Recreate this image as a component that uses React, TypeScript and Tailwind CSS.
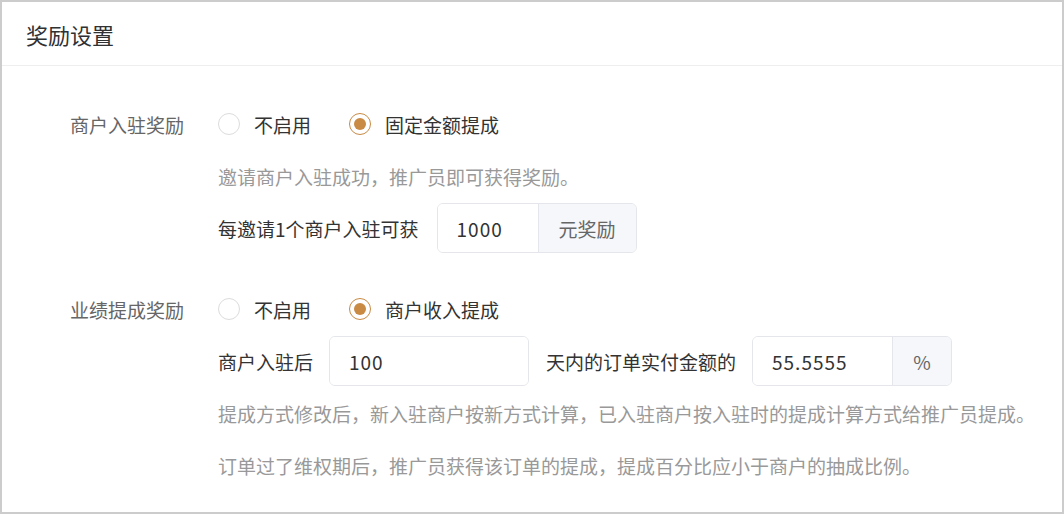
import React from "react";

const font = { fontFamily: '"Noto Sans CJK SC", "Noto Sans", sans-serif' };

/* ---------- RADIO ---------- */

const Radio = ({ label, checked }: { label: string; checked?: boolean }) => (
  <label className="flex items-center gap-[14px] cursor-pointer">
    <span
      className={`w-[22px] h-[22px] rounded-full border flex items-center justify-center bg-white ${
        checked ? "border-[#c98a43]" : "border-[#dcdcdc]"
      }`}
    >
      {checked && <span className="w-[12px] h-[12px] rounded-full bg-[#c98a43]" />}
    </span>
    <span className="text-[#333333]">{label}</span>
  </label>
);

/* ---------- INPUT WITH ADDON ---------- */

const AddonInput = ({
  value,
  addon,
  inputWidth,
  addonWidth,
}: {
  value: string;
  addon?: string;
  inputWidth: string;
  addonWidth?: string;
}) => (
  <div className="flex h-[50px] rounded-[6px] border border-[#e4e6eb] overflow-hidden">
    <input
      defaultValue={value}
      className={`${inputWidth} h-full px-[19px] text-[#333333] tracking-[1px] outline-none bg-white`}
    />
    {addon && (
      <div
        className={`${addonWidth} h-full flex items-center justify-center bg-[#f5f7fa] border-l border-[#e4e6eb] text-[#666666]`}
      >
        {addon}
      </div>
    )}
  </div>
);

const Line = ({ children }: { children: React.ReactNode }) => (
  <div className="h-[52px] flex items-center">{children}</div>
);

/* ---------- FORM ITEM ---------- */

const FormItem = ({ label, children }: { label: string; children: React.ReactNode }) => (
  <div className="flex">
    <div className="w-[148px] h-[52px] flex items-center text-[#666666]">{label}</div>
    <div className="flex flex-col">{children}</div>
  </div>
);

export default function App() {
  return (
    <div
      style={font}
      className="w-[1064px] h-[514px] border-2 border-[#cccccc] bg-white text-[19px] leading-none overflow-hidden"
    >
      <div className="h-[64px] px-[24px] flex items-center border-b border-[#eeeeee]">
        <h2 className="text-[22px] text-[#303133]">奖励设置</h2>
      </div>

      <div className="pl-[68px] pt-[32px] flex flex-col gap-[29px]">
        <FormItem label="商户入驻奖励">
          <Line>
            <div className="flex items-center gap-[38px]">
              <Radio label="不启用" />
              <Radio label="固定金额提成" checked />
            </div>
          </Line>
          <Line>
            <span className="text-[#999999]">邀请商户入驻成功，推广员即可获得奖励。</span>
          </Line>
          <Line>
            <div className="flex items-center gap-[18px]">
              <span className="text-[#333333]">每邀请1个商户入驻可获</span>
              <AddonInput value="1000" addon="元奖励" inputWidth="w-[100px]" addonWidth="w-[98px]" />
            </div>
          </Line>
        </FormItem>

        <FormItem label="业绩提成奖励">
          <Line>
            <div className="flex items-center gap-[38px]">
              <Radio label="不启用" />
              <Radio label="商户收入提成" checked />
            </div>
          </Line>
          <Line>
            <div className="flex items-center">
              <span className="text-[#333333] mr-[16px]">商户入驻后</span>
              <AddonInput value="100" inputWidth="w-[198px]" />
              <span className="text-[#333333] ml-[17px] mr-[16px]">天内的订单实付金额的</span>
              <AddonInput value="55.5555" addon="%" inputWidth="w-[139px]" addonWidth="w-[59px]" />
            </div>
          </Line>
          <Line>
            <span className="text-[#999999]">
              提成方式修改后，新入驻商户按新方式计算，已入驻商户按入驻时的提成计算方式给推广员提成。
            </span>
          </Line>
          <Line>
            <span className="text-[#999999]">
              订单过了维权期后，推广员获得该订单的提成，提成百分比应小于商户的抽成比例。
            </span>
          </Line>
        </FormItem>
      </div>
    </div>
  );
}
